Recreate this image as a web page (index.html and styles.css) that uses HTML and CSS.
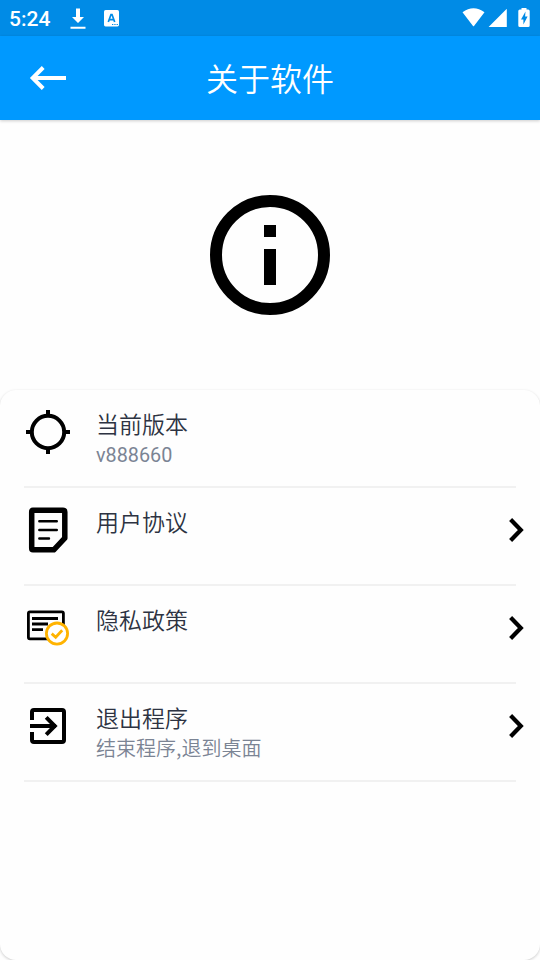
FILE: index.html
```html
<!DOCTYPE html>
<html lang="zh-CN">
<head>
<meta charset="utf-8">
<title>关于软件</title>
<link rel="stylesheet" href="styles.css">
</head>
<body>
<div class="status">
  <span class="clock">5:24</span>
  <svg class="download" width="16" height="22" viewBox="0 0 16 22"><path fill="#fff" d="M6 .4h4v8.600h4l-6 6-6-6h4zM.5 18.700h15v2H.5z"/></svg>
  <svg class="keyboard" width="15" height="17" viewBox="0 0 15 17"><rect width="15" height="16.400" rx="1.600" fill="#fff"/><path d="M4.300 12 7 4.500h1l2.700 7.500M5.400 9.700h4.200" fill="none" stroke="#008be6" stroke-width="1.700"/><path d="M8 14.500h1.300m1 0h1.300m1 0h1.300" stroke="#008be6" stroke-width="1.200"/></svg>
  <svg class="signals" width="70" height="20" viewBox="0 0 70 20"><path fill="#fff" d="M.5 4.200Q11.500-3.800 22.500 4.200L12 18Q11.500 18.500 11 18zM44.800 .8V19H26.600zM59.500 0h5v1.500h1.600q1.600 0 1.600 1.600V17.500q0 1.600-1.600 1.600h-8.200q-1.600 0-1.600-1.600V3.100q0-1.600 1.600-1.600h1.600z"/><path fill="#008be6" d="m63.500 3.500-4.500 8h2.400v5l4.200-8h-2.500z"/></svg>
</div>
<header class="bar">
  <svg class="back" width="38" height="26" viewBox="0 0 38 26"><path d="M37 13H4M14.200 2.500 3.700 13l10.500 10.500" fill="none" stroke="#fff" stroke-width="4"/></svg>
  <h1>关于软件</h1>
</header>
<section class="hero">
  <svg width="120" height="120" viewBox="0 0 120 120"><circle cx="60" cy="60" r="54" fill="none" stroke="#000" stroke-width="12"/><path d="M54 30h12v12H54zM54 54h12v36H54z"/></svg>
</section>
<main class="card">
  <div class="row">
    <svg class="icon" width="48" height="48" viewBox="0 0 48 48" fill="none" stroke="#000" stroke-width="4"><circle cx="24" cy="24" r="16.200"/><path d="M24 2v6M24 40v6M2 24h6M40 24h6"/></svg>
    <div class="text"><div class="name">当前版本</div><div class="note version">v888660</div></div>
  </div>
  <div class="row">
    <svg class="icon" width="48" height="48" viewBox="0 0 48 48" fill="none" stroke="#000"><path stroke-width="5.500" stroke-linejoin="round" d="M8.800 4.200h30.200q1.800 0 1.800 1.800v26.200L29.800 43.800H9q-1.300 0-1.300-1.300V5.400q0-1.200 1.100-1.200z"/><path stroke-width="2.400" stroke-linecap="round" d="M15.300 15.300h17.500M15.300 24h17.500M15.300 32.500h9.700"/></svg>
    <div class="text"><div class="name">用户协议</div></div>
    <svg class="chevron" width="16" height="26" viewBox="0 0 16 26"><path d="m2.600 2.500 10.200 10.500L2.600 23.500"/></svg>
  </div>
  <div class="row">
    <svg class="icon" width="48" height="48" viewBox="0 0 48 48" fill="none" stroke="#000"><rect x="4.400" y="7.800" width="35" height="27" rx="1.500" stroke-width="2.800"/><path stroke-width="2.800" d="M8 14.500h26M8 20h16M8 25.600h11"/><circle cx="33" cy="29.600" r="10.600" fill="#fff" stroke="#ffb300" stroke-width="2.800"/><path stroke="#ffb300" stroke-width="2.800" d="m27.700 29.600 4 3.700 6.500-7"/></svg>
    <div class="text"><div class="name">隐私政策</div></div>
    <svg class="chevron" width="16" height="26" viewBox="0 0 16 26"><path d="m2.600 2.500 10.200 10.500L2.600 23.500"/></svg>
  </div>
  <div class="row">
    <svg class="icon" width="48" height="48" viewBox="0 0 48 48" fill="none" stroke="#000" stroke-width="4"><path d="M8 18V10q0-2 2-2h28q2 0 2 2v28q0 2-2 2H10q-2 0-2-2V30M6 24h26M22.200 15.400 30.800 24l-8.600 8.600"/></svg>
    <div class="text"><div class="name">退出程序</div><div class="note">结束程序,退到桌面</div></div>
    <svg class="chevron" width="16" height="26" viewBox="0 0 16 26"><path d="m2.600 2.500 10.200 10.500L2.600 23.500"/></svg>
  </div>
</main>
</body>
</html>
```
FILE: styles.css
```css
* { box-sizing: border-box; }
body {
  margin: 0;
  height: 960px;
  display: flex;
  flex-direction: column;
  background: #fefefe;
  font-family: "Noto Sans CJK SC", sans-serif;
  overflow: hidden;
}
.status {
  height: 36px;
  flex: none;
  display: flex;
  align-items: flex-start;
  padding: 0 8px 0 9px;
  background: #008be6;
  color: #fff;
}
.clock { width: 61px; font: 500 21px/38px Roboto, sans-serif; }
.download { margin-top: 8px; }
.keyboard { margin: 10px 0 0 18px; }
.signals { margin: 8px 0 0 auto; }
.bar {
  height: 84px;
  flex: none;
  display: grid;
  grid-template-columns: 67px 1fr 67px;
  align-items: center;
  background: #0099ff;
  box-shadow: 0 1px 3px rgba(0, 0, 0, .2);
}
.back { margin-left: 29px; }
.bar h1 {
  margin: 0;
  padding-bottom: 3px;
  color: #fff;
  font-size: 32px;
  line-height: 40px;
  font-weight: 350;
  text-align: center;
}
.hero {
  height: 270px;
  flex: none;
  display: flex;
  align-items: center;
  justify-content: center;
}
.card {
  flex: 1;
  border-radius: 16px;
  background: #fefefe;
  box-shadow: 0 1px 3px rgba(0, 0, 0, .2);
}
.row {
  height: 98px;
  margin: 0 24px;
  display: flex;
  align-items: flex-start;
  border-bottom: 2px solid #f1f1f1;
}
.icon { flex: none; margin-top: 18px; }
.text { flex: 1; margin: 18px 0 0 24px; }
.name { color: #2d3342; font-size: 23px; line-height: 31px; font-weight: 350; }
.note { color: #7b8494; font-size: 20px; line-height: 30px; font-weight: 350; }
.version { padding-top: 2px; font-family: Roboto, sans-serif; font-size: 19.800px; font-weight: 400; }
.chevron {
  margin: 29px -8px 0 0;
  fill: none;
  stroke: #000;
  stroke-width: 4.200px;
}
```
